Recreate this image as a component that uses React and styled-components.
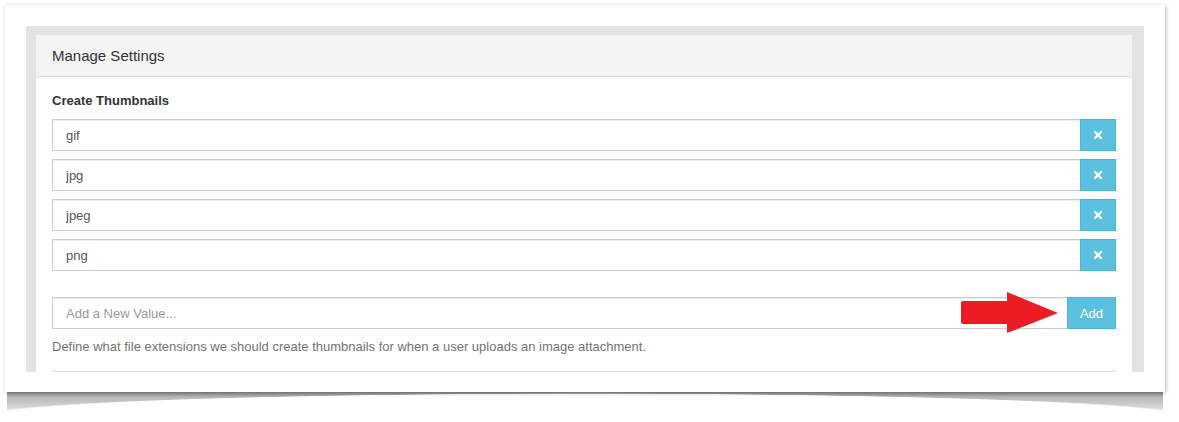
import React from 'react'
import styled, { createGlobalStyle } from 'styled-components'
import { FaTimes } from 'react-icons/fa'

const GlobalStyle = createGlobalStyle`
  html, body {
    margin: 0;
    background: #fff;
  }
  body {
    font-family: "Liberation Sans", Arial, sans-serif;
    font-size: 13px;
    color: #333;
  }
`

const Page = styled.div`
  padding: 5px 0 40px 5px;
`

const Frame = styled.div`
  position: relative;
  width: 1160px;
  box-sizing: border-box;
  padding: 21px 21px 20px 21px;
  background: #fff;
  box-shadow: 1px 1px 4px rgba(0, 0, 0, 0.28);

  &::after {
    content: '';
    position: absolute;
    left: 2px;
    right: 2px;
    top: 100%;
    height: 22px;
    background: linear-gradient(
      to bottom,
      rgba(0, 0, 0, 0.45),
      rgba(0, 0, 0, 0.28) 25%,
      rgba(0, 0, 0, 0.16) 70%,
      rgba(0, 0, 0, 0)
    );
    -webkit-mask-image: radial-gradient(ellipse 52% 100% at 50% 106%, transparent 97%, #000 100%);
    mask-image: radial-gradient(ellipse 52% 100% at 50% 106%, transparent 97%, #000 100%);
  }
`

const Well = styled.div`
  background: #e3e3e3;
  padding: 9px 12px 0 10px;
`

const Panel = styled.div`
  background: #fff;
`

const PanelHeading = styled.div`
  background: #f4f4f4;
  border-bottom: 1px solid #dcdcdc;
  padding: 10px 16px;
  font-size: 15px;
  line-height: 21px;
  color: #333;
`

const PanelBody = styled.div`
  padding: 14px 16px 0 16px;
`

const Label = styled.div`
  font-weight: bold;
  font-size: 13px;
  line-height: 19px;
  color: #333;
  margin-bottom: 9px;
`

const ValueList = styled.div`
  display: flex;
  flex-direction: column;
  gap: 8px;
`

const InputGroup = styled.div`
  position: relative;
  display: flex;
  height: 32px;
  margin-top: ${p => (p.$spaced ? '26px' : '0')};
`

const TextInput = styled.input`
  flex: 1;
  min-width: 0;
  height: 32px;
  box-sizing: border-box;
  border: 1px solid #cccccc;
  border-radius: 0;
  padding: 0 13px;
  font-family: "Liberation Sans", Arial, sans-serif;
  font-size: 13px;
  color: #555;
  background: #fff;
  box-shadow: inset 0 1px 1px rgba(0, 0, 0, 0.075);
  outline: none;

  &::placeholder {
    color: #999;
  }
`

const InfoButton = styled.button`
  width: ${p => (p.$wide ? '49px' : '36px')};
  height: 32px;
  box-sizing: border-box;
  margin-left: -1px;
  border: 1px solid #46b8da;
  border-radius: 0;
  background: #5bc0de;
  color: #fff;
  font-family: "Liberation Sans", Arial, sans-serif;
  font-size: 13px;
  padding: 0;
  display: flex;
  align-items: center;
  justify-content: center;
`

const Help = styled.div`
  margin-top: 8px;
  font-size: 13px;
  line-height: 19px;
  color: #737373;
`

const Divider = styled.div`
  margin-top: 15px;
  border-top: 1px solid #dddddd;
`

const Arrow = styled.svg`
  position: absolute;
  left: 909px;
  top: -5px;
  width: 97px;
  height: 41px;
`

const extensions = ['gif', 'jpg', 'jpeg', 'png']

const App = () => (
  <Page>
    <GlobalStyle />
    <Frame>
      <Well>
        <Panel>
          <PanelHeading>Manage Settings</PanelHeading>
          <PanelBody>
            <Label>Create Thumbnails</Label>
            <ValueList>
              {extensions.map(ext => (
                <InputGroup key={ext}>
                  <TextInput defaultValue={ext} readOnly />
                  <InfoButton>
                    <FaTimes size={12} />
                  </InfoButton>
                </InputGroup>
              ))}
            </ValueList>
            <InputGroup $spaced>
              <TextInput placeholder="Add a New Value..." />
              <InfoButton $wide>Add</InfoButton>
              <Arrow viewBox="0 0 97 41">
                <path
                  d="M2 9 H46 V0 L97 21 L46 41 V32 H2 Q0 32 0 30 V11 Q0 9 2 9 Z"
                  fill="#ed1c24"
                />
              </Arrow>
            </InputGroup>
            <Help>
              Define what file extensions we should create thumbnails for when a user uploads an
              image attachment.
            </Help>
            <Divider />
          </PanelBody>
        </Panel>
      </Well>
    </Frame>
  </Page>
)

export default App
